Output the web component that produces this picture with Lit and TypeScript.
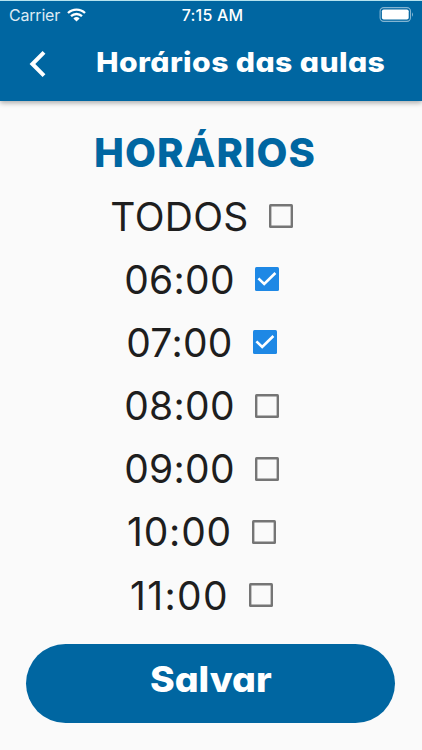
import { LitElement, html, css, svg } from "lit";
import { customElement, state } from "lit/decorators.js";

interface Slot {
  label: string;
  checked: boolean;
}

@customElement("app-root")
export class AppRoot extends LitElement {
  static styles = css`
    :host {
      display: flex;
      flex-direction: column;
      box-sizing: border-box;
      width: 422px;
      height: 750px;
      overflow: hidden;
      background: #fafafa;
      color: #1e1e1e;
      font-family: Inter, "Liberation Sans", sans-serif;
    }
    header {
      box-sizing: border-box;
      height: 101px;
      flex: none;
      background: #0066a1;
      border-top: 1px solid #b5e3ef;
      color: #fff;
      box-shadow: 0 2px 5px rgba(0, 0, 0, 0.32);
    }
    .status {
      display: grid;
      grid-template-columns: 1fr auto 1fr;
      align-items: center;
      height: 27px;
      padding: 0 8px 0 9px;
      font-size: 16px;
    }
    .carrier {
      display: flex;
      align-items: center;
      gap: 7px;
      color: #dcebf4;
      letter-spacing: -0.2px;
    }
    .time {
      padding-left: 2px;
      font-weight: 500;
      letter-spacing: 0.2px;
    }
    .battery {
      justify-self: end;
    }
    svg {
      display: block;
    }
    .bar {
      display: flex;
      align-items: center;
      height: 72px;
      padding-left: 28px;
    }
    .title {
      margin: 0 0 4px 47.5px;
      font-size: 27.5px;
      line-height: 36px;
      font-weight: 800;
      letter-spacing: 0.35px;
      white-space: nowrap;
      transform: scaleX(1.098);
      transform-origin: left;
    }
    .round {
      font-feature-settings: "cv11";
    }
    main {
      display: flex;
      flex-direction: column;
      align-items: center;
    }
    h2 {
      margin: 25px 12px 0 0;
      height: 58.5px;
      line-height: 53px;
      font-size: 40px;
      font-weight: 850;
      letter-spacing: 1.1px;
      color: #0066a1;
      white-space: nowrap;
    }
    .row {
      display: flex;
      align-items: center;
      height: 63.2px;
      font-size: 39px;
      line-height: 63.2px;
      letter-spacing: 0.3px;
      white-space: nowrap;
    }
    .row.one {
      letter-spacing: 0.8px;
    }
    .row.ones {
      letter-spacing: 1.4px;
    }
    .cell {
      display: grid;
      place-items: center;
      width: 62px;
      height: 63px;
      padding-left: 1px;
    }
    .box {
      box-sizing: border-box;
      width: 24px;
      height: 24px;
      box-shadow: inset 0 0 0 2.4px #757575;
      border-radius: 1.5px;
    }
    .box.on {
      box-shadow: none;
      background: #1e88e5;
    }
    .save {
      flex: none;
      width: 369px;
      height: 79px;
      margin: 17.6px 1px 0 0;
      padding: 0 0 8px;
      border: 0;
      border-radius: 40px;
      background: #0066a1;
      color: #fff;
      font-family: Inter, "Liberation Sans", sans-serif;
      font-size: 35px;
      font-weight: 850;
      line-height: 71px;
    }
    .save span {
      display: inline-block;
      transform: scaleX(1.07);
    }
  `;

  @state() private slots: Slot[] = [
    { label: "TODOS", checked: false },
    { label: "06:00", checked: true },
    { label: "07:00", checked: true },
    { label: "08:00", checked: false },
    { label: "09:00", checked: false },
    { label: "10:00", checked: false },
    { label: "11:00", checked: false },
  ];

  private toggle(index: number) {
    this.slots = this.slots.map((s, i) => (i === index ? { ...s, checked: !s.checked } : s));
  }

  /** Narrow "1" digits get a little more tracking. */
  private tracking(label: string) {
    return label.startsWith("11") ? "ones" : label.startsWith("1") ? "one" : "";
  }

  render() {
    return html`
      <header>
        <div class="status">
          <div class="carrier">
            <span>Carrier</span>
            <svg width="19" height="14" viewBox="0 0 19 14" fill="none" stroke="#fff" stroke-width="2.3">
              <path d="M1 5a12.2 12.2 0 0 1 17 0M4 8.2a8 8 0 0 1 11 0" />
              <path d="M6.4 10.5a4.5 4.5 0 0 1 6.2 0L9.5 13.6z" fill="#fff" stroke="none" />
            </svg>
          </div>
          <span class="time">7:15 AM</span>
          <svg class="battery" width="35" height="15" viewBox="0 0 35 15">
            <rect x="1.1" y=".6" width="30.4" height="13.8" rx="3.6" fill="none" stroke="#84b5d2" stroke-width="1.1" />
            <rect x="2.9" y="2.4" width="26.8" height="10.2" rx="1.8" fill="#fff" />
            <path d="M33 5.2q2 2.3 0 4.6z" fill="#84b5d2" />
          </svg>
        </div>
        <div class="bar">
          <svg width="20" height="28" viewBox="0 0 20 28" fill="none" stroke="#fff" stroke-width="4">
            <path d="M16 2.4 4.4 14 16 25.6" />
          </svg>
          <h1 class="title round">Horários das aulas</h1>
        </div>
      </header>
      <main>
        <h2>HORÁRIOS</h2>
        ${this.slots.map(
          (s, i) => html`
            <div class="row ${this.tracking(s.label)}" @click=${() => this.toggle(i)}>
              <span class="label">${s.label}</span>
              <span class="cell">
                <span class="box ${s.checked ? "on" : ""}">
                  ${s.checked
                    ? svg`<svg width="24" height="24" viewBox="0 0 24 24" fill="none" stroke="#fff" stroke-width="2.6"><path d="M3.4 11.4 9.2 17 20.4 6" /></svg>`
                    : null}
                </span>
              </span>
            </div>
          `
        )}
        <button class="save round"><span>Salvar</span></button>
      </main>
    `;
  }
}
